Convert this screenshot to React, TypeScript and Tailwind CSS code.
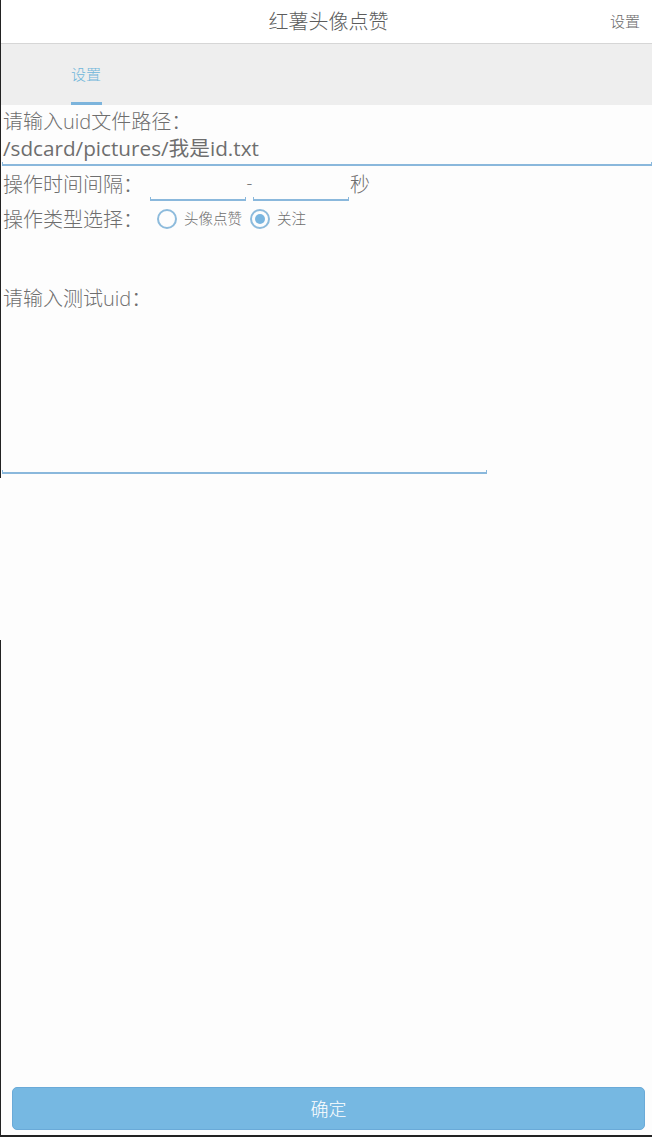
import React from "react";

const font = { fontFamily: "'Open Sans', 'Noto Sans CJK SC', sans-serif" };

function Underline({ className = "" }: { className?: string }) {
  return <div className={"h-[4px] border-x border-b-2 border-[#8ab8dc] " + className} />;
}

function Radio({ checked, label }: { checked?: boolean; label: string }) {
  return (
    <div className="flex items-center gap-[7px]">
      <div className="w-[20px] h-[20px] rounded-full border-2 border-[#8dbbdc] flex items-center justify-center">
        {checked && <div className="w-[10px] h-[10px] rounded-full bg-[#7ab6e0]" />}
      </div>
      <span className="text-[14.5px] text-[#6e6e6e] leading-none">{label}</span>
    </div>
  );
}

export default function App() {
  return (
    <div className="w-[652px] h-[1137px] flex flex-col bg-[#fdfdfd] overflow-hidden font-light" style={font}>
      <div className="flex flex-1 min-h-0">
        <div className="w-[1px] flex flex-col shrink-0">
          <div className="h-[478px] bg-[#222]" />
          <div className="h-[162px]" />
          <div className="flex-1 bg-[#222]" />
        </div>
        <div className="flex-1 flex flex-col min-w-0">
          {/* Header */}
          <div className="h-[44px] bg-white border-b border-[#d6d6d6] relative flex items-center justify-center shrink-0">
            <span className="text-[20px] text-[#5c5c5c] ml-[4px] leading-none">红薯头像点赞</span>
            <span className="absolute right-[12px] text-[15px] text-[#6a6a6a] leading-none">设置</span>
          </div>
          {/* Tab bar */}
          <div className="h-[61px] bg-[#eeeeee] flex shrink-0">
            <div className="ml-[69px] w-[32px] flex flex-col items-center">
              <div className="flex-1 flex items-center pt-[2px]">
                <span className="text-[15px] text-[#6fb6da] leading-none">设置</span>
              </div>
              <div className="h-[3px] w-[31px] bg-[#7cb4dc]" />
            </div>
          </div>
          {/* Content */}
          <div className="pl-[1px] text-[20px] text-[#6e6e6e]">
            <div className="h-[31px] flex items-end leading-[28px] pl-[1px]">请输入uid文件路径：</div>
            <div className="h-[26px] flex items-center pl-[1px] font-normal text-[20.7px]">/sdcard/pictures/我是id.txt</div>
            <Underline />
            <div className="h-[36px] flex items-center pl-[1px]">
              <span className="self-start pt-[4px]">操作时间间隔：</span>
              <div className="ml-[7px] w-[96px] h-full flex flex-col justify-end pb-[1px]"><Underline /></div>
              <span className="w-[7px] text-center self-start pt-[4px] text-[18px]">-</span>
              <div className="w-[96px] h-full flex flex-col justify-end pb-[1px]"><Underline /></div>
              <span className="self-start pt-[4px] ml-[1px]">秒</span>
            </div>
            <div className="h-[34px] flex items-center pl-[1px]">
              <span className="self-start pt-[3px]">操作类型选择：</span>
              <div className="ml-[14px] flex items-center gap-[8px]">
                <Radio label="头像点赞" />
                <Radio checked label="关注" />
              </div>
            </div>
            <div className="w-[485px]">
              <div className="h-[50px]" />
              <div className="h-[26px] flex items-center pl-[1px]">请输入测试uid：</div>
              <div className="h-[158px]" />
              <Underline />
            </div>
          </div>
          <div className="flex-1" />
          {/* Button */}
          <div className="pl-[11px] pr-[7px] pb-[5px]">
            <div className="h-[43px] rounded-[5px] bg-[#76b8e2] border border-[#6aaad8] flex items-center justify-center">
              <span className="text-[18px] text-white leading-none">确定</span>
            </div>
          </div>
        </div>
      </div>
      <div className="h-[2px] bg-[#222] shrink-0" />
    </div>
  );
}
